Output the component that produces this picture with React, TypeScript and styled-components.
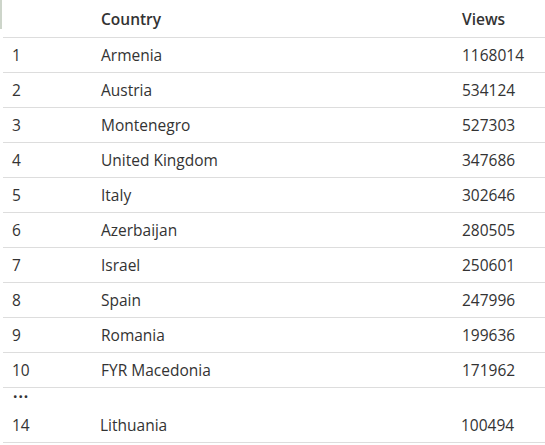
import React from 'react';
import styled, { createGlobalStyle } from "styled-components";

const GlobalStyle = createGlobalStyle`
  html, body {
    margin: 0;
    padding: 0;
  }
  body {
    width: 545px;
    height: 445px;
    overflow: hidden;
    background: linear-gradient(#cdd5ca, #cdd5ca) 0 0 / 2px 29px no-repeat, #fff;
    font-family: "Open Sans", "Noto Sans", sans-serif;
    color: #333;
  }
`

const rows = [
  { n: 1, country: "Armenia", views: 1168014 },
  { n: 2, country: "Austria", views: 534124 },
  { n: 3, country: "Montenegro", views: 527303 },
  { n: 4, country: "United Kingdom", views: 347686 },
  { n: 5, country: "Italy", views: 302646 },
  { n: 6, country: "Azerbaijan", views: 280505 },
  { n: 7, country: "Israel", views: 250601 },
  { n: 8, country: "Spain", views: 247996 },
  { n: 9, country: "Romania", views: 199636 },
  { n: 10, country: "FYR Macedonia", views: 171962 },
];

function App() {
  return (
    <>
      <GlobalStyle />
      <Table>
        <HeadRow>
          <Cell />
          <Cell>Country</Cell>
          <Cell>Views</Cell>
        </HeadRow>
        {rows.map((r) => (
          <Row key={r.n}>
            <Cell>{r.n}</Cell>
            <Cell>{r.country}</Cell>
            <Cell>{r.views}</Cell>
          </Row>
        ))}
        <Gap>...</Gap>
        <Row $shift>
          <Cell>14</Cell>
          <Cell>Lithuania</Cell>
          <Cell>100494</Cell>
        </Row>
      </Table>
    </>
  );
}

export default App;

const Table = styled.div`
  margin-left: 3px;
  width: 542px;
  font-size: 15.5px;
`
const Row = styled.div<{ $shift?: boolean }>`
  display: grid;
  grid-template-columns: ${(p) => (p.$shift ? "97px 361px 1fr" : "98px 361px 1fr")};
  align-items: center;
  height: 35px;
  box-sizing: border-box;
  padding-bottom: 1px;
  border-bottom: 1px solid #dddddd;
`
const HeadRow = styled(Row)`
  height: 38px;
  font-weight: 600;
  padding-top: 1px;
  padding-bottom: 0;
`
const Cell = styled.div`
  padding-left: 9px;
  white-space: nowrap;
  &:nth-child(n+2) {
    padding-left: 0;
  }
`
const Gap = styled.div`
  height: 20px;
  line-height: 8px;
  padding-left: 10px;
  font-weight: 700;
  letter-spacing: 1px;
`
